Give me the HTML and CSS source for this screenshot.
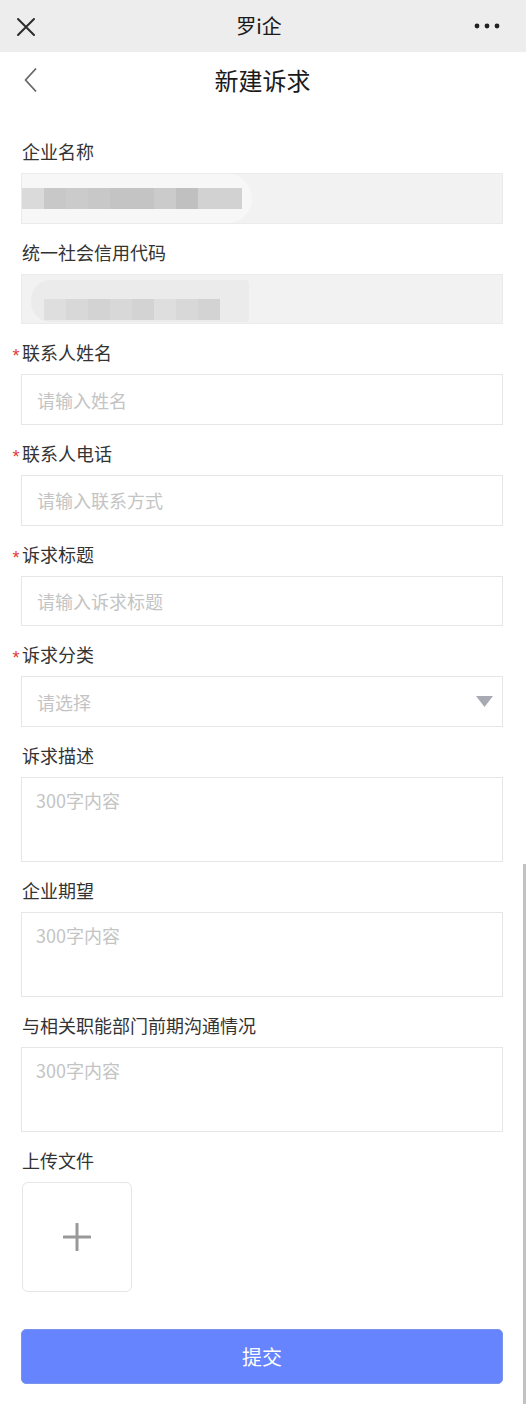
FILE: index.html
```html
<!DOCTYPE html>
<html lang="zh-CN">
<head>
<meta charset="utf-8">
<title>新建诉求</title>
<link rel="stylesheet" href="styles.css">
</head>
<body>
<div class="page">
  <div class="topbar">
    <svg class="close-icon" width="20" height="20" viewBox="0 0 20 20"><path d="M2 2 L18 18 M18 2 L2 18" stroke="#2b2b2b" stroke-width="2" stroke-linecap="round" fill="none"/></svg>
    <div class="app-title">罗i企</div>
    <svg class="more-icon" width="26" height="6" viewBox="0 0 26 6"><circle cx="3" cy="3" r="2.4" fill="#222"/><circle cx="13" cy="3" r="2.4" fill="#222"/><circle cx="23" cy="3" r="2.4" fill="#222"/></svg>
  </div>
  <div class="header">
    <svg class="back-icon" width="16" height="26" viewBox="0 0 16 26"><path d="M13 1.5 L2.5 13 L13 24.5" stroke="#666" stroke-width="1.8" fill="none" stroke-linejoin="round"/></svg>
    <div class="page-title">新建诉求</div>
    <div class="header-spacer"></div>
  </div>

  <div class="form">
    <div class="field">
      <div class="label">企业名称</div>
      <div class="box box-disabled">
        <div class="blur blur-one">
          <span class="px s1"></span><span class="px s2"></span><span class="px s3"></span><span class="px s2"></span><span class="px s4"></span><span class="px s4"></span><span class="px s3"></span><span class="px s5"></span><span class="px s6"></span><span class="px s6"></span>
        </div>
      </div>
    </div>
    <div class="field">
      <div class="label">统一社会信用代码</div>
      <div class="box box-disabled">
        <div class="blur blur-two">
          <div class="row-top"></div>
          <div class="row-bottom">
            <span class="px t1"></span><span class="px t2"></span><span class="px t3"></span><span class="px t2"></span><span class="px t3"></span><span class="px t1"></span><span class="px t2"></span><span class="px t3"></span>
          </div>
        </div>
      </div>
    </div>
    <div class="field">
      <div class="label"><span class="req">*</span>联系人姓名</div>
      <div class="box"><span class="ph">请输入姓名</span></div>
    </div>
    <div class="field">
      <div class="label"><span class="req">*</span>联系人电话</div>
      <div class="box"><span class="ph">请输入联系方式</span></div>
    </div>
    <div class="field">
      <div class="label"><span class="req">*</span>诉求标题</div>
      <div class="box"><span class="ph">请输入诉求标题</span></div>
    </div>
    <div class="field">
      <div class="label"><span class="req">*</span>诉求分类</div>
      <div class="box box-select"><span class="ph">请选择</span>
        <svg class="caret" width="17" height="11" viewBox="0 0 17 11"><path d="M0 0 H17 L8.5 11 Z" fill="#a7aab3"/></svg>
      </div>
    </div>
    <div class="field">
      <div class="label">诉求描述</div>
      <div class="box box-area"><span class="ph">300字内容</span></div>
    </div>
    <div class="field">
      <div class="label">企业期望</div>
      <div class="box box-area"><span class="ph">300字内容</span></div>
    </div>
    <div class="field">
      <div class="label">与相关职能部门前期沟通情况</div>
      <div class="box box-area"><span class="ph">300字内容</span></div>
    </div>
    <div class="field">
      <div class="label">上传文件</div>
      <div class="upload">
        <svg width="28" height="28" viewBox="0 0 28 28"><path d="M14 1 V27 M1 14 H27" stroke="#999" stroke-width="3" stroke-linecap="round"/></svg>
      </div>
    </div>
    <div class="submit">提交</div>
  </div>
  <div class="scrollbar"></div>
</div>
</body>
</html>
```
FILE: styles.css
```css
* { box-sizing: border-box; }
html, body { margin: 0; padding: 0; background: #fff; }
body {
  font-family: "Noto Sans CJK SC", "Noto Sans", sans-serif;
  color: #333;
}
.page {
  position: relative;
  width: 526px;
  height: 1404px;
  overflow: hidden;
}
.topbar {
  height: 52px;
  background: #ededed;
  display: flex;
  align-items: center;
  justify-content: space-between;
  padding: 0 26px 0 16px;
}
.close-icon { margin-top: 2px; }
.app-title {
  font-size: 20px;
  color: #1a1a1a;
  line-height: 24px;
  margin-left: 8px;
}
.header {
  height: 56px;
  display: flex;
  align-items: center;
  justify-content: space-between;
  padding: 0 24px 0 23px;
}
.back-icon { width: 16px; }
.header-spacer { width: 16px; }
.page-title {
  font-size: 24px;
  color: #1a1a1a;
  line-height: 30px;
}
.form {
  display: flex;
  flex-direction: column;
  gap: 16px;
  padding: 31px 23px 0 21px;
}
.field {
  display: flex;
  flex-direction: column;
}
.label {
  font-size: 18px;
  line-height: 24px;
  height: 24px;
  color: #333;
  margin-bottom: 10px;
  padding-left: 1px;
  display: flex;
  align-items: flex-start;
}
.req {
  flex: none;
  width: 12px;
  margin-left: -12px;
  color: #e5393d;
  font-family: "Liberation Sans", sans-serif;
  font-size: 18px;
  line-height: 16px;
  text-align: center;
  padding-top: 8px;
}
.box {
  height: 50.67px;
  border: 1px solid #e6e6e6;
  background: #fff;
  display: flex;
  align-items: center;
  padding: 0 15px;
  position: relative;
}
.ph {
  font-size: 18px;
  color: #c4c4c4;
  line-height: 24px;
}
.box-disabled {
  background: #f2f2f2;
  border-color: #ebebeb;
  padding: 0;
}
.box-select { justify-content: space-between; padding-right: 9px; }
.box-area {
  height: 85px;
  align-items: flex-start;
  padding-top: 10px;
  padding-left: 14px;
}
.blur { display: flex; }
.blur-one {
  height: 100%;
  width: 230px;
  align-items: center;
  background: #f7f7f7;
  border-radius: 0 24px 24px 0;
}
.px { display: block; width: 22px; height: 21px; }
.s1 { background: #dadada; }
.s2 { background: #c8c8c8; }
.s3 { background: #cbcbcb; }
.s4 { background: #c4c4c4; }
.s5 { background: #c0c0c0; }
.s6 { background: #d2d2d2; }
.blur-two {
  flex-direction: column;
  margin-left: 9px;
  width: 218px;
  height: 42px;
  margin-top: 4px;
  background: #ebebeb;
  border-radius: 20px 4px 4px 20px;
  overflow: hidden;
}
.row-top { height: 19px; }
.row-bottom { display: flex; padding-left: 13px; }
.t1 { background: #dedede; }
.t2 { background: #d8d8d8; }
.t3 { background: #d3d3d3; }
.upload {
  width: 110px;
  height: 110px;
  border: 1px solid #e6e6e6;
  border-radius: 6px;
  display: flex;
  align-items: center;
  justify-content: center;
  margin-left: 1px;
}
.submit {
  margin-top: 21px;
  height: 55px;
  background: #6584fe;
  border: 1px solid #7b93e8;
  border-radius: 5px;
  color: #fff;
  font-size: 20px;
  display: flex;
  align-items: center;
  justify-content: center;
}
.scrollbar {
  position: absolute;
  right: 0;
  top: 864px;
  width: 3px;
  height: 540px;
  background: #c2c2c2;
}
```
